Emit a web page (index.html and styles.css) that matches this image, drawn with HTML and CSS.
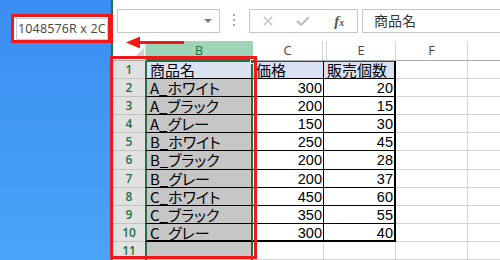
FILE: index.html
```html
<!DOCTYPE html>
<html lang="ja">
<head>
<meta charset="utf-8">
<title>Excel selection</title>
<link rel="stylesheet" href="styles.css">
</head>
<body>
<div class="screen">
  <div class="desktop"></div>
  <div class="excel">
    <div class="fbar">
      <div class="namebox"><span class="caret"></span></div>
      <div class="dots"><i></i><i></i><i></i></div>
      <div class="fbtns">
        <svg class="ico" width="10" height="10" viewBox="0 0 10 10"><path d="M1 1L9 9M9 1L1 9" stroke="#bdbdbd" stroke-width="1.4" fill="none"/></svg>
        <svg class="ico" width="14" height="10" viewBox="0 0 14 10"><path d="M1 5L5 9L13 1" stroke="#bdbdbd" stroke-width="2" fill="none"/></svg>
        <span class="fx">f<small>x</small></span>
      </div>
      <div class="finput">商品名</div>
    </div>
    <div class="sheet">
      <div class="hrow">
        <div class="corner"><svg width="8" height="8" viewBox="0 0 8 8"><polygon points="8,0 8,8 0,8" fill="#d0d0d0"/></svg></div>
        <div class="ch ch-b">B</div>
        <div class="ch ch-c">C</div>
        <div class="ch ch-d"></div>
        <div class="ch ch-e">E</div>
        <div class="ch ch-f">F</div>
        <div class="ch ch-g"></div>
      </div>
      <div class="row first">
        <div class="rh">1</div>
        <div class="cb head">商品名<span class="handle"></span></div>
        <div class="cc head">価格</div>
        <div class="ce head">販売個数</div>
        <div class="cf"></div><div class="cg"></div>
      </div>
      <div class="row"><div class="rh">2</div><div class="cb">A_ホワイト</div><div class="cc">300</div><div class="ce">20</div><div class="cf"></div><div class="cg"></div></div>
      <div class="row"><div class="rh">3</div><div class="cb">A_ブラック</div><div class="cc">200</div><div class="ce">15</div><div class="cf"></div><div class="cg"></div></div>
      <div class="row"><div class="rh">4</div><div class="cb">A_グレー</div><div class="cc">150</div><div class="ce">30</div><div class="cf"></div><div class="cg"></div></div>
      <div class="row"><div class="rh">5</div><div class="cb">B_ホワイト</div><div class="cc">250</div><div class="ce">45</div><div class="cf"></div><div class="cg"></div></div>
      <div class="row"><div class="rh">6</div><div class="cb">B_ブラック</div><div class="cc">200</div><div class="ce">28</div><div class="cf"></div><div class="cg"></div></div>
      <div class="row"><div class="rh">7</div><div class="cb">B_グレー</div><div class="cc">200</div><div class="ce">37</div><div class="cf"></div><div class="cg"></div></div>
      <div class="row"><div class="rh">8</div><div class="cb">C_ホワイト</div><div class="cc">450</div><div class="ce">60</div><div class="cf"></div><div class="cg"></div></div>
      <div class="row"><div class="rh">9</div><div class="cb">C_ブラック</div><div class="cc">350</div><div class="ce">55</div><div class="cf"></div><div class="cg"></div></div>
      <div class="row last"><div class="rh">10</div><div class="cb">C_グレー</div><div class="cc">300</div><div class="ce">40</div><div class="cf"></div><div class="cg"></div></div>
      <div class="row empty"><div class="rh">11</div><div class="cb"></div><div class="cc"></div><div class="ce"></div><div class="cf"></div><div class="cg"></div></div>
    </div>
  </div>
  <div class="callout"><div class="callout-box">1048576R x 2C</div></div>
  <div class="selmark"></div>
  <svg class="arrow" width="62" height="15" viewBox="0 0 62 15"><polygon points="2,7.5 16,1.5 16,13.5" fill="#f01818"/><rect x="15" y="6" width="45" height="3" fill="#f01818"/></svg>
</div>
</body>
</html>
```

FILE: styles.css
```css
* { box-sizing: border-box; margin: 0; padding: 0; }
html, body { width: 500px; height: 260px; overflow: hidden; background: #fff; }
body { font-family: "Noto Sans CJK JP", sans-serif; }

.screen { position: relative; display: flex; width: 500px; height: 260px; overflow: hidden; }
.desktop { width: 111px; flex: none; background: linear-gradient(180deg, #3a8ef1 0%, #419af5 55%, #4aa4fa 100%); }
.excel { flex: 1; min-width: 0; border-left: 2px solid #217346; display: flex; flex-direction: column; background: #fff; }

/* formula bar */
.fbar { height: 41px; flex: none; display: flex; align-items: flex-start; padding-top: 9px; }
.namebox { width: 103px; height: 24px; margin-left: 4px; border: 1px solid #c6c6c6; display: flex; justify-content: flex-end; align-items: center; padding-right: 7px; }
.caret { width: 0; height: 0; border-left: 4px solid transparent; border-right: 4px solid transparent; border-top: 4px solid #7a7a7a; }
.dots { display: flex; flex-direction: column; gap: 3px; margin: 5px 14px 0 13px; }
.dots i { display: block; width: 2px; height: 2px; background: #a8a8a8; }
.fbtns { width: 109px; height: 24px; border: 1px solid #c6c6c6; display: grid; grid-template-columns: 1fr 1fr 1fr; align-items: center; justify-items: center; }
.fx { font-family: "Liberation Serif", serif; font-style: italic; font-weight: bold; font-size: 15px; color: #555; line-height: 1; }
.fx small { font-size: 10px; }
.finput { flex: 1; height: 24px; margin-left: 4px; border: 1px solid #c6c6c6; border-right: none; padding-left: 11px; font-size: 14px; line-height: 21px; color: #333; }

/* sheet */
.sheet { flex: 1; display: flex; flex-direction: column; }
.hrow { height: 20px; flex: none; display: flex; }
.corner { width: 33px; flex: none; display: flex; justify-content: flex-end; align-items: flex-end; padding: 0 1px 4px 0; border-bottom: 1px solid #ababab; border-right: 1px solid #d4d4d4; }
.ch { height: 20px; flex: none; border-right: 1px solid #d4d4d4; border-bottom: 1px solid #ababab; font-family: "Open Sans", sans-serif; font-size: 13px; line-height: 19px; text-align: center; color: #444; }
.ch-b { width: 107px; background: #9fd5b7; color: #217346; border-right-color: #9fd5b7; border-bottom: 2px solid #217346; }
.ch-c { width: 70px; }
.ch-d { width: 4px; }
.ch-e { width: 69px; }
.ch-f { width: 72px; }
.ch-g { flex: 1; border-right: none; }

.row { height: 18.1px; flex: none; display: flex; }
.row > div { height: 100%; flex: none; }
.rh { width: 32px; background: #e1e1e1; border-bottom: 1px solid #c2c2c2; font-family: "Open Sans", sans-serif; font-weight: 600; font-size: 12px; line-height: 17px; text-align: center; color: #217346; }
.cb { position: relative; width: 108px; background: #c6c6c6; border-left: 2px solid #217346; border-right: 2px solid #217346; border-bottom: 1px solid #000; padding-left: 3px; font-size: 15px; line-height: 17px; font-feature-settings: "palt"; color: #000; white-space: nowrap; overflow: visible; }
.cc, .ce { text-align: right; font-family: "Liberation Sans", sans-serif; font-size: 14.5px; line-height: 18px; color: #000; border-bottom: 1px solid #000; padding-right: 1px; }
.cc { width: 71px; border-right: 1px solid #000; }
.ce { width: 72px; border-right: 2px solid #000; }
.cf { width: 72px; border-right: 1px solid #d4d4d4; border-bottom: 1px solid #d4d4d4; }
.row > .cg { flex: 1; border-bottom: 1px solid #d4d4d4; }

.head { background: #d9e1f2; font-family: "Noto Sans CJK JP", sans-serif; font-size: 15px; line-height: 17px; text-align: left; padding-left: 3px; font-feature-settings: "palt"; }
.first .cb { background: #dbe2f2; }
.first > .cb { box-shadow: inset 0 1px 0 #217346; }
.first > .cc, .first > .ce { box-shadow: inset 0 1px 0 #444; }
.handle { position: absolute; top: -2px; right: -4px; width: 5px; height: 5px; background: #217346; border: 1px solid #fff; }
.last > .cb, .last > .cc, .last > .ce { border-bottom: 2px solid #000; }
.empty > .cb { border-bottom: none; }
.empty > .cc { border-right: 1px solid #d4d4d4; border-bottom: 1px solid #d4d4d4; }
.empty > .ce { border-right: 1px solid #d4d4d4; border-bottom: 1px solid #d4d4d4; }

/* annotations */
.callout { position: absolute; left: 11px; top: 14px; width: 102px; height: 29px; border: 3px solid #f01818; border-right-width: 5px; background: #fff; padding: 1px 0 0 2px; }
.callout-box { width: 92px; height: 22px; border: 1px solid #c5cfdc; font-family: "Open Sans", sans-serif; font-size: 12.5px; letter-spacing: 0.15px; line-height: 20px; color: #444; padding-left: 1px; white-space: nowrap; overflow: hidden; }
.selmark { position: absolute; left: 110px; top: 56px; width: 147px; height: 203px; border: 3px solid #f01818; }
.arrow { position: absolute; left: 124px; top: 35px; }
```
